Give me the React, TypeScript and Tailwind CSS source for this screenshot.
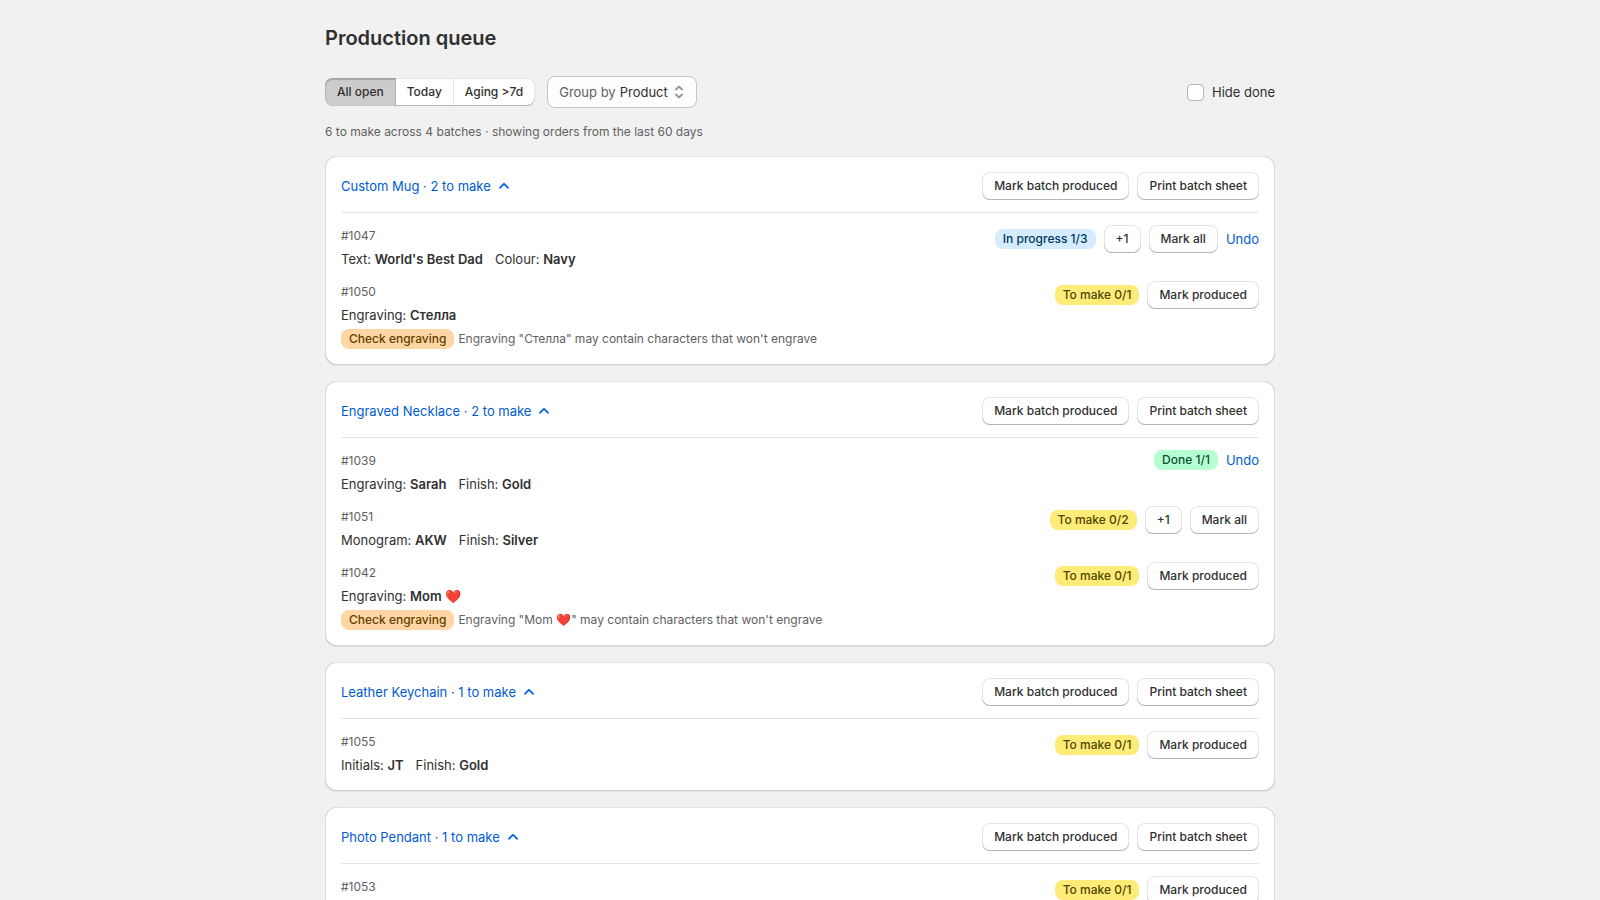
import { useState } from 'react';
import clsx from 'clsx';

type Item = {
  order: string;
  fields: [string, string][];
  made: number;
  total: number;
  warning?: string;
};

type Batch = {
  product: string;
  items: Item[];
};

const batches: Batch[] = [
  {
    product: 'Custom Mug',
    items: [
      {
        order: '#1047',
        fields: [
          ['Text', "World's Best Dad"],
          ['Colour', 'Navy'],
        ],
        made: 1,
        total: 3,
      },
      {
        order: '#1050',
        fields: [['Engraving', 'Стелла']],
        made: 0,
        total: 1,
        warning: 'Engraving "Стелла" may contain characters that won\'t engrave',
      },
    ],
  },
  {
    product: 'Engraved Necklace',
    items: [
      {
        order: '#1039',
        fields: [
          ['Engraving', 'Sarah'],
          ['Finish', 'Gold'],
        ],
        made: 1,
        total: 1,
      },
      {
        order: '#1051',
        fields: [
          ['Monogram', 'AKW'],
          ['Finish', 'Silver'],
        ],
        made: 0,
        total: 2,
      },
      {
        order: '#1042',
        fields: [['Engraving', 'Mom ❤️']],
        made: 0,
        total: 1,
        warning: 'Engraving "Mom ❤️" may contain characters that won\'t engrave',
      },
    ],
  },
  {
    product: 'Leather Keychain',
    items: [
      {
        order: '#1055',
        fields: [
          ['Initials', 'JT'],
          ['Finish', 'Gold'],
        ],
        made: 0,
        total: 1,
      },
    ],
  },
  {
    product: 'Photo Pendant',
    items: [
      {
        order: '#1053',
        fields: [],
        made: 0,
        total: 1,
      },
    ],
  },
];

const filters = ['All open', 'Today', 'Aging >7d'];

const badgeTones = {
  info: 'bg-[#d5ebff] text-[#003a5a]',
  attention: 'bg-[#ffeb78] text-[#4f4700]',
  warning: 'bg-[#ffd6a4] text-[#5e4200]',
  success: 'bg-[#b4fed2] text-[#0c5132]',
};

function Badge({ tone, children }: { tone: keyof typeof badgeTones; children: React.ReactNode }) {
  return (
    <span
      className={clsx(
        'inline-flex h-5 shrink-0 items-center rounded-lg px-2 text-xs font-medium whitespace-nowrap',
        badgeTones[tone]
      )}
    >
      {children}
    </span>
  );
}

function Button({ children }: { children: React.ReactNode }) {
  return (
    <button
      type="button"
      className="h-7 rounded-lg bg-white px-3 text-xs font-medium whitespace-nowrap shadow-[inset_0_-1px_0_0_#b5b5b5,inset_0_0_0_1px_rgba(0,0,0,0.1)] hover:bg-[#fafafa]"
    >
      {children}
    </button>
  );
}

function LinkButton({ children }: { children: React.ReactNode }) {
  return (
    <button type="button" className="leading-5 text-[#005bd3] hover:underline">
      {children}
    </button>
  );
}

function ChevronIcon({ open }: { open: boolean }) {
  return (
    <svg
      viewBox="0 0 20 20"
      className={clsx('size-5', !open && 'rotate-180')}
      fill="currentColor"
      stroke="currentColor"
      strokeWidth="0.4"
      aria-hidden="true"
    >
      <path
        fillRule="evenodd"
        d="M14.53 12.28a.75.75 0 0 1-1.06 0l-3.47-3.47-3.47 3.47a.75.75 0 0 1-1.06-1.06l4-4a.75.75 0 0 1 1.06 0l4 4a.75.75 0 0 1 0 1.06Z"
      />
    </svg>
  );
}

function SelectIcon() {
  return (
    <svg
      viewBox="0 0 20 20"
      className="pointer-events-none size-5 text-[#8a8a8a]"
      fill="currentColor"
      stroke="currentColor"
      strokeWidth="0.4"
      aria-hidden="true"
    >
      <path d="M10.884 4.323a1.25 1.25 0 0 0-1.768 0l-2.646 2.647a.75.75 0 0 0 1.06 1.06l2.47-2.47 2.47 2.47a.75.75 0 1 0 1.06-1.06l-2.646-2.647Z" />
      <path d="m13.53 13.03-2.646 2.647a1.25 1.25 0 0 1-1.768 0l-2.646-2.647a.75.75 0 0 1 1.06-1.06l2.47 2.47 2.47-2.47a.75.75 0 0 1 1.06 1.06Z" />
    </svg>
  );
}

function ItemStatus({ made, total }: { made: number; total: number }) {
  if (made >= total) {
    return <Badge tone="success">{`Done ${made}/${total}`}</Badge>;
  }
  if (made > 0) {
    return <Badge tone="info">{`In progress ${made}/${total}`}</Badge>;
  }
  return <Badge tone="attention">{`To make ${made}/${total}`}</Badge>;
}

function ItemRow({ item }: { item: Item }) {
  const done = item.made >= item.total;

  return (
    <li className="flex items-start justify-between gap-4">
      <div className="flex flex-col gap-1">
        <p className="leading-5">
          <span className="text-xs text-[#616161]">{item.order}</span>
        </p>
        <div className="flex flex-wrap gap-x-3">
          {item.fields.map(([name, value]) => (
            <p key={name} className="leading-5">
              {name}: <strong className="font-semibold">{value}</strong>
            </p>
          ))}
        </div>
        {item.warning && (
          <div className="flex items-center gap-1">
            <Badge tone="warning">Check engraving</Badge>
            <span className="text-xs leading-5 text-[#616161]">{item.warning}</span>
          </div>
        )}
      </div>
      <div className="flex shrink-0 items-center gap-2">
        <ItemStatus made={item.made} total={item.total} />
        {!done && item.total > 1 && <Button>+1</Button>}
        {!done && <Button>{item.total > 1 ? 'Mark all' : 'Mark produced'}</Button>}
        {item.made > 0 && <LinkButton>Undo</LinkButton>}
      </div>
    </li>
  );
}

function BatchCard({ batch, hideDone }: { batch: Batch; hideDone: boolean }) {
  const [open, setOpen] = useState(true);
  const openItems = batch.items.filter((item) => item.made < item.total);
  const items = hideDone ? openItems : batch.items;

  return (
    <section className="flex flex-col gap-3 rounded-xl bg-white p-4 shadow-[inset_1px_0_0_0_rgba(0,0,0,0.13),inset_-1px_0_0_0_rgba(0,0,0,0.13),inset_0_-1px_0_0_rgba(0,0,0,0.17),inset_0_1px_0_0_rgba(204,204,204,0.5),0_1px_0_0_rgba(26,26,26,0.07)]">
      <div className="flex items-center justify-between">
        <button
          type="button"
          aria-expanded={open}
          onClick={() => setOpen(!open)}
          className="flex items-center gap-[3px] leading-5 text-[#005bd3]"
        >
          {`${batch.product} · ${openItems.length} to make`}
          <ChevronIcon open={open} />
        </button>
        <div className="flex gap-2">
          <Button>Mark batch produced</Button>
          <Button>Print batch sheet</Button>
        </div>
      </div>
      {open && (
        <>
          <hr className="border-[#e3e3e3]" />
          <ul className="flex flex-col gap-3">
            {items.map((item) => (
              <ItemRow key={item.order} item={item} />
            ))}
          </ul>
        </>
      )}
    </section>
  );
}

export default function App() {
  const [filter, setFilter] = useState(filters[0]);
  const [hideDone, setHideDone] = useState(false);

  return (
    <div className="min-h-screen bg-[#f1f1f1] font-['Inter',sans-serif] text-[13px] text-[#303030]">
      <main className="mx-auto max-w-[998px] p-6">
        <h1 className="text-xl leading-7 font-semibold">Production queue</h1>

        <div className="mt-6 flex flex-col gap-4">
          <div className="flex items-center justify-between">
            <div className="flex items-center gap-3">
              <div className="flex">
                {filters.map((name) => (
                  <button
                    key={name}
                    type="button"
                    aria-pressed={filter === name}
                    onClick={() => setFilter(name)}
                    className={clsx(
                      'h-7 px-3 text-xs font-medium first:rounded-l-lg last:rounded-r-lg not-first:-ml-px',
                      filter === name
                        ? 'z-10 bg-[#cccccc] shadow-[inset_-1px_0_1px_0_rgba(26,26,26,0.12),inset_1px_0_1px_0_rgba(26,26,26,0.12),inset_0_2px_1px_0_rgba(26,26,26,0.2)]'
                        : 'bg-white shadow-[inset_0_-1px_0_0_#b5b5b5,inset_0_0_0_1px_rgba(0,0,0,0.1)]'
                    )}
                  >
                    {name}
                  </button>
                ))}
              </div>
              <div className="flex h-8 items-center rounded-lg border border-[#c4c4c4] bg-[#fdfdfd] pr-[7px] pl-[11px]">
                <label htmlFor="group-by" className="mr-1 leading-5 text-[#616161]">
                  Group by
                </label>
                <select id="group-by" defaultValue="Product" className="appearance-none leading-5 outline-none">
                  <option>Product</option>
                </select>
                <SelectIcon />
              </div>
            </div>
            <label className="flex items-center gap-2 leading-5">
              <input
                type="checkbox"
                checked={hideDone}
                onChange={(e) => setHideDone(e.target.checked)}
                className="size-[17px] appearance-none rounded border border-[#b5b5b5] bg-white checked:bg-[#303030]"
              />
              Hide done
            </label>
          </div>

          <p className="text-xs leading-4 text-[#616161]">
            6 to make across 4 batches · showing orders from the last 60 days
          </p>

          {batches.map((batch) => (
            <BatchCard key={batch.product} batch={batch} hideDone={hideDone} />
          ))}
        </div>
      </main>
    </div>
  );
}
